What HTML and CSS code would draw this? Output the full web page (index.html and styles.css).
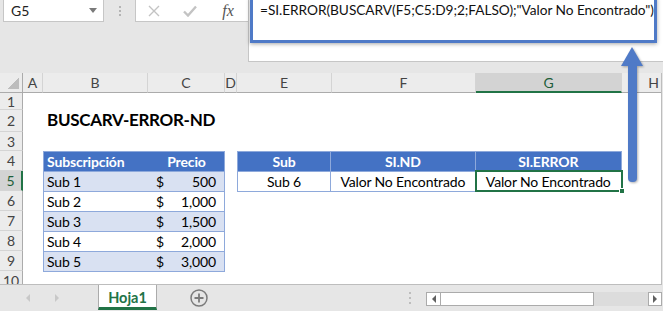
FILE: index.html
```html
<!DOCTYPE html>
<html lang="es">
<head>
    <meta charset="UTF-8">
    <title>BUSCARV-ERROR-ND</title>
    <link rel="stylesheet" href="styles.css">
</head>
<body>
<div class="app">
    <div class="toolbar">
        <div class="namebox"><span>G5</span><span class="drop"></span></div>
        <div class="grip"><span></span></div>
        <div class="fbuttons">
            <span class="fbtn">
                <svg width="12" height="12" viewBox="0 0 12 12"><path d="M1 1L11 11M11 1L1 11" stroke="#c3c3c3" stroke-width="1.4" fill="none"/></svg>
            </span>
            <span class="fbtn">
                <svg width="14" height="12" viewBox="0 0 14 12"><path d="M1 6.5L5 10.5L13 1.5" stroke="#c3c3c3" stroke-width="2.4" fill="none"/></svg>
            </span>
            <span class="fbtn fx">fx</span>
        </div>
        <div class="formula">
            <div class="formula-box">=SI.ERROR(BUSCARV(F5;C5:D9;2;FALSO);"Valor No Encontrado")</div>
        </div>
    </div>

    <div class="sheet">
        <div class="corner"></div>
        <div class="colhead">A</div>
        <div class="colhead">B</div>
        <div class="colhead">C</div>
        <div class="colhead">D</div>
        <div class="colhead">E</div>
        <div class="colhead">F</div>
        <div class="colhead sel">G</div>
        <div class="colhead">H</div>

        <div class="rowhead">1</div>
        <div class="rowhead">2</div>
        <div class="rowhead">3</div>
        <div class="rowhead">4</div>
        <div class="rowhead sel">5</div>
        <div class="rowhead">6</div>
        <div class="rowhead">7</div>
        <div class="rowhead">8</div>
        <div class="rowhead">9</div>
        <div class="rowhead">10</div>

        <div class="title">BUSCARV-ERROR-ND</div>

        <table class="tbl tbl-prices">
            <colgroup><col class="c-b"><col class="c-c"></colgroup>
            <tr><th class="left">Subscripción</th><th>Precio</th></tr>
            <tr class="band"><td>Sub 1</td><td><div class="money"><span>$</span><span>500</span></div></td></tr>
            <tr><td>Sub 2</td><td><div class="money"><span>$</span><span>1,000</span></div></td></tr>
            <tr class="band"><td>Sub 3</td><td><div class="money"><span>$</span><span>1,500</span></div></td></tr>
            <tr><td>Sub 4</td><td><div class="money"><span>$</span><span>2,000</span></div></td></tr>
            <tr class="band"><td>Sub 5</td><td><div class="money"><span>$</span><span>3,000</span></div></td></tr>
        </table>

        <table class="tbl tbl-lookup">
            <colgroup><col class="c-e"><col class="c-f"><col class="c-g"></colgroup>
            <tr><th>Sub</th><th>SI.ND</th><th>SI.ERROR</th></tr>
            <tr><td>Sub 6</td><td>Valor No Encontrado</td><td>Valor No Encontrado</td></tr>
        </table>

        <div class="selection"><span class="handle"></span></div>
    </div>

    <div class="tabbar">
        <div class="tabnav">
            <span class="nav"><i class="tri-left"></i></span>
            <span class="nav"><i class="tri-right"></i></span>
        </div>
        <div class="tab">Hoja1</div>
        <div class="addsheet">
            <svg width="18" height="18" viewBox="0 0 18 18"><circle cx="9" cy="9" r="8" fill="none" stroke="#7b7b7b" stroke-width="1.5"/><path d="M9 4.5V13.5M4.5 9H13.5" stroke="#7b7b7b" stroke-width="1.8"/></svg>
        </div>
        <div class="spacer"></div>
        <div class="hgrip"></div>
        <div class="hscroll">
            <span class="sbtn"><i class="tri-left dark"></i></span>
            <span class="thumb"></span>
            <span class="track"></span>
            <span class="sbtn"><i class="tri-right dark"></i></span>
        </div>
    </div>

    <!-- flecha que señala la fórmula -->
    <svg class="arrow" width="32" height="142" viewBox="0 0 32 142">
        <polygon points="16,3 5,22 27,22" fill="#4f7ac7"/>
        <rect x="12" y="18" width="9" height="120" rx="4" fill="#4f7ac7"/>
    </svg>
</div>
</body>
</html>
```

FILE: styles.css
```css
* {
    box-sizing: border-box;
}
body {
    margin: 0;
    width: 663px;
    height: 311px;
    overflow: hidden;
    background: #e6e6e6;
    font-family: Lato, "Liberation Sans", sans-serif;
    color: #000;
}
.app {
    position: relative;
    width: 663px;
    height: 311px;
}

/* barra de fórmulas */
.toolbar {
    display: flex;
    align-items: flex-start;
    height: 73px;
}
.namebox {
    display: flex;
    align-items: center;
    justify-content: space-between;
    width: 101px;
    height: 22px;
    margin-left: 3px;
    padding: 0 6px 0 7px;
    background: #fff;
    border: 1px solid #c6c6c6;
    border-top: none;
    font-size: 14px;
    color: #222;
}
.namebox .drop {
    width: 0;
    height: 0;
    border-left: 4px solid transparent;
    border-right: 4px solid transparent;
    border-top: 5px solid #7a7a7a;
}
.grip {
    width: 31px;
    height: 22px;
    display: flex;
    align-items: center;
    justify-content: center;
}
.grip span {
    width: 2px;
    height: 10px;
    background: repeating-linear-gradient(#b4b4b4 0 2px, transparent 2px 4px);
}
.fbuttons {
    display: flex;
    align-items: center;
    width: 113px;
    height: 22px;
    background: #fff;
    border-left: 1px solid #c6c6c6;
    border-bottom: 1px solid #c6c6c6;
}
.fbtn {
    width: 36px;
    display: flex;
    justify-content: center;
}
.fbtn.fx {
    font-family: "Liberation Serif", serif;
    font-style: italic;
    font-size: 16px;
    color: #555;
    margin-left: 2px;
}
.formula {
    flex: 1;
    height: 62px;
    background: #fff;
    border-left: 1px solid #c6c6c6;
    border-bottom: 1px solid #c6c6c6;
    padding-left: 1px;
}
.formula-box {
    width: 407px;
    height: 46px;
    margin-top: -3px;
    padding: 1px 0 0 7px;
    border: 3px solid #4f7ac7;
    box-shadow: 0 1px 4px rgba(0, 0, 0, 0.35);
    font-size: 13.7px;
    letter-spacing: -0.05px;
    line-height: 18px;
    color: #111;
    white-space: nowrap;
}

/* hoja */
.sheet {
    display: grid;
    grid-template-columns: 23px 20px 105px 77px 12px 95px 144px 146px 64px;
    grid-template-rows: 20px 17px 22px 19px 20px 20px 20px 20px 20px 20px 20px;
    width: 662px;
    height: 212px;
    overflow: hidden;
    background: #fff;
    border-right: 1px solid #bdbdbd;
    border-bottom: 1px solid #bdbdbd;
}
.corner {
    background: linear-gradient(to top left, #bdbdbd 0 50%, transparent 50%) no-repeat right 3px bottom 3px / 12px 12px, #ececec;
    border-right: 1px solid #ababab;
    border-bottom: 1px solid #ababab;
}
.colhead {
    display: flex;
    align-items: center;
    justify-content: center;
    background: #ececec;
    border-right: 1px solid #d4d4d4;
    border-bottom: 1px solid #ababab;
    font-size: 14px;
    color: #444;
}
.rowhead {
    grid-column: 1;
    display: flex;
    align-items: center;
    justify-content: center;
    background: #ececec;
    border-right: 1px solid #ababab;
    border-bottom: 1px solid #d4d4d4;
    font-size: 14px;
    color: #444;
}
.colhead.sel {
    background: #d3d3d3;
    border-bottom: 2px solid #217346;
    color: #1e5e3a;
}
.rowhead.sel {
    background: #d3d3d3;
    border-right: 2px solid #217346;
    color: #1e5e3a;
}
.title {
    grid-column: 3 / 7;
    grid-row: 3;
    align-self: end;
    padding: 0 0 1px 4px;
    font-size: 17px;
    letter-spacing: -0.3px;
    font-weight: bold;
    line-height: 22px;
    white-space: nowrap;
}

/* tablas */
.tbl {
    border-collapse: collapse;
    table-layout: fixed;
    width: 100%;
    height: 100%;
    font-size: 14px;
    letter-spacing: -0.15px;
}
.tbl th, .tbl td {
    height: 20px;
    padding: 0 3px;
    border: 1px solid #8ea9db;
    white-space: nowrap;
    overflow: hidden;
    text-align: center;
    font-weight: normal;
}
.tbl th {
    background: #4472c4;
    color: #fff;
    font-weight: bold;
}
/* el ancho de col no incluye el padding de las celdas */
.c-b { width: 99px; }
.c-c { width: 71px; }
.c-e { width: 89px; }
.c-f { width: 138px; }
.c-g { width: 140px; }
.tbl-prices {
    grid-column: 3 / 5;
    grid-row: 5 / 11;
}
.tbl-prices th, .tbl-prices td {
    border-left: none;
    border-right: none;
    text-align: left;
}
.tbl-prices tr > :first-child {
    border-left: 1px solid #8ea9db;
}
.tbl-prices tr > :last-child {
    border-right: 1px solid #8ea9db;
}
.tbl-prices th:last-child {
    text-align: center;
}
.tbl-prices .band td {
    background: #d9e1f2;
}
.money {
    display: flex;
    justify-content: space-between;
    padding: 0 5px 0 4px;
}
.tbl-lookup {
    grid-column: 6 / 9;
    grid-row: 5 / 7;
}
.selection {
    grid-column: 8;
    grid-row: 6;
    position: relative;
    margin: -1px;
    border: 2px solid #217346;
}
.selection .handle {
    position: absolute;
    right: -4px;
    bottom: -4px;
    width: 6px;
    height: 6px;
    background: #217346;
    border: 1px solid #fff;
}

/* pestañas */
.tabbar {
    display: flex;
    align-items: flex-start;
    height: 26px;
}
.tabnav {
    display: flex;
    width: 98px;
    height: 26px;
    padding-left: 13px;
}
.nav {
    width: 29px;
    display: flex;
    align-items: center;
    justify-content: center;
}
.tri-left, .tri-right {
    width: 0;
    height: 0;
    border-top: 4px solid transparent;
    border-bottom: 4px solid transparent;
}
.tri-left {
    border-right: 4px solid #c8c8c8;
}
.tri-right {
    border-left: 4px solid #c8c8c8;
}
.tri-left.dark {
    border-right-color: #606060;
}
.tri-right.dark {
    border-left-color: #606060;
}
.tab {
    width: 59px;
    height: 25px;
    display: flex;
    align-items: center;
    justify-content: center;
    background: #fff;
    border-left: 1px solid #ababab;
    border-right: 1px solid #ababab;
    border-bottom: 3px solid #217346;
    padding-top: 2px;
    font-size: 14.5px;
    font-weight: bold;
    color: #217346;
}
.addsheet {
    margin: 4px 0 0 33px;
    width: 18px;
    height: 18px;
}
.addsheet svg {
    display: block;
}
.spacer {
    flex: 1;
}
.hgrip {
    width: 2px;
    height: 12px;
    margin: 7px 15px 0 0;
    background: repeating-linear-gradient(#bdbdbd 0 2px, transparent 2px 5px);
}
.hscroll {
    display: flex;
    width: 236px;
    height: 14px;
    margin: 7px 1px 0 0;
}
.sbtn {
    width: 15px;
    display: flex;
    align-items: center;
    justify-content: center;
    background: #fff;
    border: 1px solid #ababab;
}
.sbtn:last-child {
    width: 14px;
}
.thumb {
    width: 153px;
    background: #fff;
    border: 1px solid #ababab;
    border-left: none;
}
.track {
    flex: 1;
    background: #dcdcdc;
}

.arrow {
    position: absolute;
    left: 616px;
    top: 44px;
    filter: drop-shadow(1px 1px 1px rgba(0, 0, 0, 0.3));
}
```
